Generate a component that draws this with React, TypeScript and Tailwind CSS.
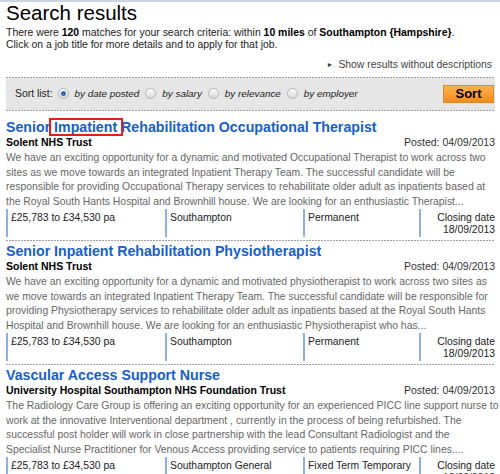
import React from "react";

type Job = {
    title: string;
    employer: string;
    posted: string;
    lines: string[];
    salary: string;
    location: string;
    contract: string;
    closing: string;
};

const jobs: Job[] = [
    {
        title: "Senior Impatient Rehabilitation Occupational Therapist",
        employer: "Solent NHS Trust",
        posted: "04/09/2013",
        lines: [
            "We have an exciting opportunity for a dynamic and motivated Occupational Therapist to work across two",
            "sites as we move towards an integrated Inpatient Therapy Team. The successful candidate will be",
            "responsible for providing Occupational Therapy services to rehabilitate older adult as inpatients based at",
            "the Royal South Hants Hospital and Brownhill house. We are looking for an enthusiastic Therapist...",
        ],
        salary: "£25,783 to £34,530 pa",
        location: "Southampton",
        contract: "Permanent",
        closing: "18/09/2013",
    },
    {
        title: "Senior Inpatient Rehabilitation Physiotherapist",
        employer: "Solent NHS Trust",
        posted: "04/09/2013",
        lines: [
            "We have an exciting opportunity for a dynamic and motivated physiotherapist to work across two sites as",
            "we move towards an integrated Inpatient Therapy Team. The successful candidate will be responsible for",
            "providing Physiotherapy services to rehabilitate older adult as inpatients based at the Royal South Hants",
            "Hospital and Brownhill house. We are looking for an enthusiastic Physiotherapist who has...",
        ],
        salary: "£25,783 to £34,530 pa",
        location: "Southampton",
        contract: "Permanent",
        closing: "18/09/2013",
    },
    {
        title: "Vascular Access Support Nurse",
        employer: "University Hospital Southampton NHS Foundation Trust",
        posted: "04/09/2013",
        lines: [
            "The Radiology Care Group is offering an exciting opportunity for an experienced PICC line support nurse to",
            "work at the innovative Interventional department , currently in the process of being refurbished. The",
            "successful post holder will work in close partnership with the lead Consultant Radiologist and the",
            "Specialist Nurse Practitioner for Venous Access providing service to patients requiring PICC lines....",
        ],
        salary: "£25,783 to £34,530 pa",
        location: "Southampton General",
        contract: "Fixed Term Temporary",
        closing: "18/09/2013",
    },
];

const sortOptions = [
    { label: "by date posted", checked: true },
    { label: "by salary" },
    { label: "by relevance" },
    { label: "by employer" },
];

function Dashes() {
    return (
        <div className="h-px bg-[linear-gradient(to_right,#a0a0a0_2px,transparent_2px)] bg-[length:3px_1px]" />
    );
}

function Radio({ checked }: { checked?: boolean }) {
    return (
        <span className="inline-flex h-[11px] w-[11px] shrink-0 items-center justify-center rounded-full border border-[#b4b4b4] bg-[linear-gradient(#ffffff,#d8d8d8)]">
            {checked && <span className="h-[5px] w-[5px] rounded-full bg-[#2f6fae]" />}
        </span>
    );
}

function JobTitle({ title }: { title: string }) {
    if (!title.includes("Impatient")) return <>{title}</>;
    const [before, after] = title.split("Impatient");
    return (
        <>
            {before}
            <span className="relative">
                Impatient
                <span className="absolute -left-[5px] -right-[6px] -top-[1px] -bottom-[1px] border-2 border-[#e41e1e]" />
            </span>
            {after}
        </>
    );
}

function JobItem({ job, first }: { job: Job; first?: boolean }) {
    return (
        <div className={first ? "pt-[8px]" : "pt-[2px]"}>
            <a className="block text-[14.2px] font-bold leading-[16px] text-[#1660cc]">
                <JobTitle title={job.title} />
            </a>
            <div className="flex justify-between text-[10.5px] leading-[14px]">
                <span className="font-bold text-black">{job.employer}</span>
                <span className="text-[#333]">Posted: {job.posted}</span>
            </div>
            <div className="mt-[2px] text-[10.4px] leading-[14.5px] text-[#666]">
                {job.lines.map((line) => (
                    <div key={line} className="whitespace-nowrap">
                        {line}
                    </div>
                ))}
            </div>
            <div className="mb-[3px] flex text-[10.4px] leading-[12px] text-[#222]">
                <div className="w-[159px] border-l-2 border-[#8db2e2] pl-[3px] pt-[3px] pb-[13px]">{job.salary}</div>
                <div className="w-[138px] border-l-2 border-[#8db2e2] pl-[3px] pt-[3px]">{job.location}</div>
                <div className="w-[116px] border-l-2 border-[#8db2e2] pl-[3px] pt-[3px]">{job.contract}</div>
                <div className="flex-1 border-l-2 border-[#8db2e2] pt-[3px] text-right">
                    Closing date
                    <br />
                    {job.closing}
                </div>
            </div>
            <Dashes />
        </div>
    );
}

export default function App() {
    return (
        <div className="h-[474px] w-[500px] overflow-hidden bg-white font-['Liberation_Sans',Arial,sans-serif]">
            <div className="h-[2px] bg-[#c9d5e2]" />
            <div className="pl-[6px] pr-[5px]">
                <h1 className="text-[20.5px] leading-[22px] text-black">Search results</h1>
                <p className="mt-[3px] text-[10.45px] leading-[12px] text-[#222]">
                    There were <b className="text-black">120</b> matches for your search criteria: within{" "}
                    <b className="text-black">10 miles</b> of <b className="text-black">Southampton {"{Hampshire}"}</b>.
                    <br />
                    Click on a job title for more details and to apply for that job.
                </p>
                <div className="mt-[8px] flex items-center justify-end pr-[3px] text-[10.4px] leading-[12px] text-[#444]">
                    <span className="mr-[5px] text-[7px]">►</span>
                    <span>Show results without descriptions</span>
                </div>
                <div className="mt-[6px]">
                    <Dashes />
                    <div className="flex h-[32px] items-center bg-[#e6e6e6] pl-[9px] pr-[1px] text-[10.4px] text-[#222]">
                        <span className="mr-[5px]">Sort list:</span>
                        {sortOptions.map((opt) => (
                            <label key={opt.label} className="mr-[6px] flex items-center">
                                <Radio checked={opt.checked} />
                                <span className="ml-[6px] text-[9.9px] italic">{opt.label}</span>
                            </label>
                        ))}
                        <button className="ml-auto h-[18px] w-[51px] border border-[#d98a2b] bg-[linear-gradient(#fcb24c,#f28b1d)] text-[13px] font-bold leading-[16px] text-black">
                            Sort
                        </button>
                    </div>
                    <Dashes />
                </div>
                {jobs.map((job, i) => (
                    <JobItem key={job.title} job={job} first={i === 0} />
                ))}
            </div>
        </div>
    );
}
